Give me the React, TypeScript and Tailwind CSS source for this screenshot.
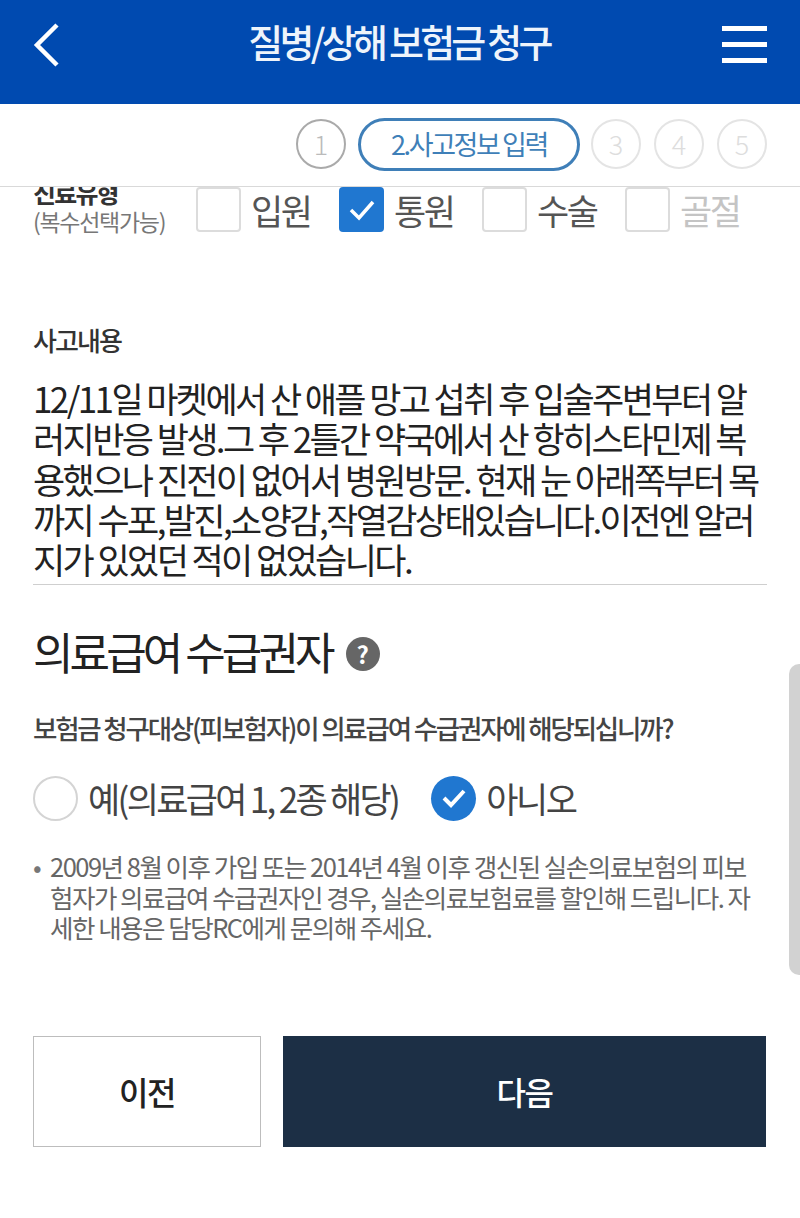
import React from "react";

const font = { fontFamily: '"Noto Sans CJK KR", "Noto Sans", sans-serif' };

function Circle({ n, active }: { n: string; active?: boolean }) {
  return (
    <div className={`w-[50px] h-[50px] rounded-full border-2 flex items-center justify-center text-[27px] font-light ${active ? "border-[#aaaaaa] text-[#bbbbbb]" : "border-[#e4e4e4] text-[#dddddd]"}`}>
      {n}
    </div>
  );
}

function Check({ label, checked, dim, w }: { label: string; checked?: boolean; dim?: boolean; w: string }) {
  return (
    <div className={`flex items-center ${w}`}>
      <div className={`w-[45px] h-[45px] rounded-[4px] shrink-0 flex items-center justify-center ${checked ? "bg-[#2077d0]" : "border-2 border-[#dcdcdc] bg-white"}`}>
        {checked && (
          <svg width="30" height="26" viewBox="0 0 30 26" fill="none">
            <path d="M4 13 L12 21 L26 5" stroke="white" strokeWidth="3.5" />
          </svg>
        )}
      </div>
      <span className={`ml-[10px] text-[35px] leading-[45px] tracking-[-2.5px] whitespace-nowrap ${dim ? "text-[#c4c4c4]" : "text-[#555555]"}`}>{label}</span>
    </div>
  );
}

export default function App() {
  return (
    <div className="w-[800px] h-[1218px] bg-white overflow-hidden relative flex flex-col" style={font}>
      <header className="h-[104px] bg-[#004ab0] shrink-0 flex items-start justify-between pl-[32px] pr-[33px] pt-[23px]">
        <svg width="30" height="44" viewBox="0 0 30 44" fill="none">
          <path d="M25 2 L5 22 L25 42" stroke="white" strokeWidth="4.5" />
        </svg>
        <h1 className="ml-[14px] -mt-[2px] text-[38px] leading-[40px] font-medium text-[#eef4fb] tracking-[-3.75px] whitespace-nowrap">질병/상해 보험금 청구</h1>
        <div className="w-[45px] h-[37px] mt-[3px] flex flex-col justify-between">
          <div className="h-[5px] bg-white" />
          <div className="h-[5px] bg-white" />
          <div className="h-[5px] bg-white" />
        </div>
      </header>

      <div className="h-[83px] shrink-0 border-b border-[#d9d9d9] flex items-center justify-end pr-[33px] pb-[2px]">
        <Circle n="1" active />
        <div className="ml-[12px] w-[222px] h-[53px] rounded-full border-[3px] border-[#3f7fb8] flex items-center justify-center text-[27px] text-[#3f7fb8] tracking-[-2.4px]">2.사고정보 입력</div>
        <div className="ml-[11px] flex gap-[13px]">
          <Circle n="3" />
          <Circle n="4" />
          <Circle n="5" />
        </div>
      </div>

      <main className="flex-1 overflow-hidden px-[33px] relative">
        <div className="flex items-start h-[62px] -mt-[10px]">
          <div className="w-[163px] shrink-0">
            <div className="text-[25px] leading-[30px] font-bold text-[#333333] tracking-[-1.8px]">진료유형</div>
            <div className="text-[23px] leading-[30px] text-[#777777] tracking-[-1.3px] -mt-[1px] whitespace-nowrap">(복수선택가능)</div>
          </div>
          <div className="flex mt-[10px]">
            <Check label="입원" w="w-[143px]" />
            <Check label="통원" checked w="w-[143px]" />
            <Check label="수술" w="w-[143px]" />
            <Check label="골절" dim w="w-[120px]" />
          </div>
        </div>

        <div className="mt-[84px] text-[26px] leading-[34px] font-medium text-[#333333] tracking-[-1.9px]">사고내용</div>

        <div className="mt-[21px] border-b border-[#cfcfcf] text-[35px] leading-[40.25px] text-[#222222] tracking-[-2.6px] h-[207px]">
          12/11일 마켓에서 산 애플 망고 섭취 후 입술주변부터 알<br />
          러지반응 발생.그 후 2틀간 약국에서 산 항히스타민제 복<br />
          용했으나 진전이 없어서 병원방문. 현재 눈 아래쪽부터 목<br />
          까지 수포,발진,소양감,작열감상태있습니다.이전엔 알러<br />
          지가 있었던 적이 없었습니다.
        </div>

        <div className="mt-[36px] flex items-center h-[60px]">
          <h2 className="text-[44px] leading-[60px] text-[#222222] tracking-[-3.9px] whitespace-nowrap">의료급여 수급권자</h2>
          <div className="ml-[14px] mt-[5px] w-[34px] h-[34px] rounded-full bg-[#666666] text-white font-bold text-[24px] flex items-center justify-center">?</div>
        </div>

        <p className="mt-[27px] text-[26.5px] leading-[40px] font-medium text-[#444444] tracking-[-2.2px] whitespace-nowrap">보험금 청구대상(피보험자)이 의료급여 수급권자에 해당되십니까?</p>

        <div className="mt-[27px] flex items-center h-[46px]">
          <div className="w-[45px] h-[45px] rounded-full border-2 border-[#d4d4d4] shrink-0" />
          <span className="ml-[10px] text-[35px] text-[#444444] tracking-[-2.7px] whitespace-nowrap">예(의료급여 1, 2종 해당)</span>
          <div className="ml-[33px] w-[45px] h-[45px] rounded-full bg-[#2077d0] shrink-0 flex items-center justify-center">
            <svg width="28" height="24" viewBox="0 0 28 24" fill="none">
              <path d="M4 12 L11 19 L24 5" stroke="white" strokeWidth="4" />
            </svg>
          </div>
          <span className="ml-[10px] text-[35px] text-[#444444] tracking-[-2.4px]">아니오</span>
        </div>

        <div className="mt-[30px] flex text-[25.5px] leading-[30.5px] text-[#666666] tracking-[-1.5px]">
          <span className="w-[17px] shrink-0 text-[#777777]">•</span>
          <p className="whitespace-nowrap">
            2009년 8월 이후 가입 또는 2014년 4월 이후 갱신된 실손의료보험의 피보<br />
            험자가 의료급여 수급권자인 경우, 실손의료보험료를 할인해 드립니다. 자<br />
            세한 내용은 담당RC에게 문의해 주세요.
          </p>
        </div>

        <div className="mt-[93px] flex gap-[22px] h-[111px] pr-[1px]">
          <button className="w-[228px] border border-[#bdbdbd] bg-white text-[32px] font-medium text-[#222222] tracking-[-1.5px]">이전</button>
          <button className="flex-1 bg-[#1c2f45] text-[32px] font-medium text-white tracking-[-1.5px]">다음</button>
        </div>

        <div className="absolute right-0 top-[477px] w-[11px] h-[311px] rounded-l-[10px] bg-[#d2d2d2]" />
      </main>
    </div>
  );
}
